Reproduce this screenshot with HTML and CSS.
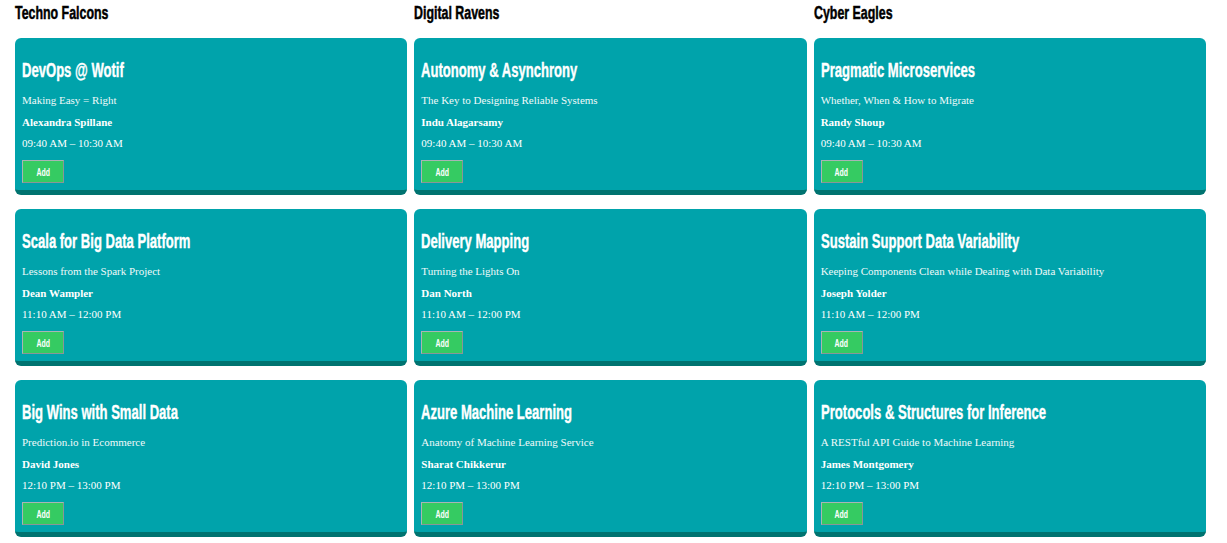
FILE: index.html
```html
<!DOCTYPE html>
<html>
<head>
<meta charset="utf-8">
<link rel="stylesheet" href="styles.css">
</head>
<body>
<div class="board">
  <section class="track">
    <h2 class="track-title">Techno Falcons</h2>
    <div class="card">
      <h3 class="talk-title">DevOps @ Wotif</h3>
      <p class="sub">Making Easy = Right</p>
      <p class="speaker">Alexandra Spillane</p>
      <p class="time">09:40 AM – 10:30 AM</p>
      <button class="add"><span class="add-label">Add</span></button>
    </div>
    <div class="card">
      <h3 class="talk-title">Scala for Big Data Platform</h3>
      <p class="sub">Lessons from the Spark Project</p>
      <p class="speaker">Dean Wampler</p>
      <p class="time">11:10 AM – 12:00 PM</p>
      <button class="add"><span class="add-label">Add</span></button>
    </div>
    <div class="card">
      <h3 class="talk-title">Big Wins with Small Data</h3>
      <p class="sub">Prediction.io in Ecommerce</p>
      <p class="speaker">David Jones</p>
      <p class="time">12:10 PM – 13:00 PM</p>
      <button class="add"><span class="add-label">Add</span></button>
    </div>
  </section>
  <section class="track">
    <h2 class="track-title">Digital Ravens</h2>
    <div class="card">
      <h3 class="talk-title">Autonomy &amp; Asynchrony</h3>
      <p class="sub">The Key to Designing Reliable Systems</p>
      <p class="speaker">Indu Alagarsamy</p>
      <p class="time">09:40 AM – 10:30 AM</p>
      <button class="add"><span class="add-label">Add</span></button>
    </div>
    <div class="card">
      <h3 class="talk-title">Delivery Mapping</h3>
      <p class="sub">Turning the Lights On</p>
      <p class="speaker">Dan North</p>
      <p class="time">11:10 AM – 12:00 PM</p>
      <button class="add"><span class="add-label">Add</span></button>
    </div>
    <div class="card">
      <h3 class="talk-title">Azure Machine Learning</h3>
      <p class="sub">Anatomy of Machine Learning Service</p>
      <p class="speaker">Sharat Chikkerur</p>
      <p class="time">12:10 PM – 13:00 PM</p>
      <button class="add"><span class="add-label">Add</span></button>
    </div>
  </section>
  <section class="track">
    <h2 class="track-title">Cyber Eagles</h2>
    <div class="card">
      <h3 class="talk-title">Pragmatic Microservices</h3>
      <p class="sub">Whether, When &amp; How to Migrate</p>
      <p class="speaker">Randy Shoup</p>
      <p class="time">09:40 AM – 10:30 AM</p>
      <button class="add"><span class="add-label">Add</span></button>
    </div>
    <div class="card">
      <h3 class="talk-title">Sustain Support Data Variability</h3>
      <p class="sub">Keeping Components Clean while Dealing with Data Variability</p>
      <p class="speaker">Joseph Yolder</p>
      <p class="time">11:10 AM – 12:00 PM</p>
      <button class="add"><span class="add-label">Add</span></button>
    </div>
    <div class="card">
      <h3 class="talk-title">Protocols &amp; Structures for Inference</h3>
      <p class="sub">A RESTful API Guide to Machine Learning</p>
      <p class="speaker">James Montgomery</p>
      <p class="time">12:10 PM – 13:00 PM</p>
      <button class="add"><span class="add-label">Add</span></button>
    </div>
  </section>
</div>
</body>
</html>
```
FILE: styles.css
```css
html, body {
  margin: 0;
  padding: 0;
  background: #ffffff;
}
body {
  font-family: "Liberation Serif", "Times New Roman", serif;
}
.board {
  display: grid;
  grid-template-columns: repeat(3, 1fr);
  column-gap: 7px;
  width: 1191px;
  padding-left: 15px;
}
.track {
  display: flex;
  flex-direction: column;
  gap: 14px;
}
.track-title {
  font-family: "Liberation Sans", Arial, sans-serif;
  font-weight: bold;
  font-size: 18.5px;
  line-height: 24px;
  margin: 1px 0 -1px 0;
  color: #000;
  transform: scaleX(0.67);
  transform-origin: left center;
  white-space: nowrap;
  -webkit-text-stroke: 0.5px currentColor;
}
.card {
  background: #00a3ab;
  border-radius: 6px;
  border-bottom: 5px solid #007370;
  padding: 20px 7px 6.5px;
  color: #fff;
}
.talk-title {
  font-family: "Liberation Sans", Arial, sans-serif;
  font-weight: bold;
  font-size: 19.5px;
  line-height: 24px;
  margin: 0 0 12px 0;
  transform: scaleX(0.67);
  transform-origin: left center;
  white-space: nowrap;
  -webkit-text-stroke: 0.4px currentColor;
}
.card p {
  font-size: 11px;
  line-height: 12.65px;
  margin: 9px 0;
}
.card p.sub { margin-top: 0; color: #f0fafa; }
.speaker { font-weight: bold; }
.add {
  display: block;
  width: 42px;
  height: 23px;
  margin-top: 10.5px;
  padding: 0;
  background: #35cb62;
  border: 1px solid #aab4b4;
  border-right-color: #8a9696;
  border-bottom-color: #8a9696;
  color: #fff;
  font-family: "Liberation Sans", Arial, sans-serif;
  font-size: 10.5px;
  font-weight: bold;
  text-align: center;
}
.add-label {
  display: inline-block;
  transform: scaleX(0.66);
}
```
